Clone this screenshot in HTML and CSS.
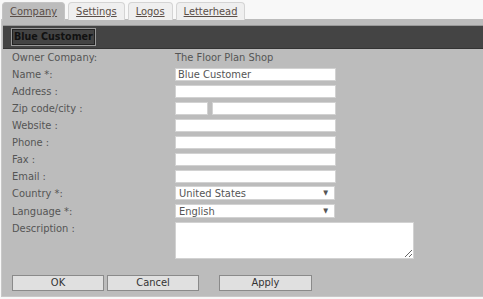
FILE: index.html
```html
<!DOCTYPE html>
<html>
<head>
<meta charset="utf-8">
<link rel="stylesheet" href="styles.css">
</head>
<body>
<div class="tabs">
  <a class="tab active">Company</a>
  <a class="tab">Settings</a>
  <a class="tab">Logos</a>
  <a class="tab">Letterhead</a>
</div>
<div class="panel">
  <div class="titlebar"><span class="title">Blue Customer</span></div>
  <div class="form">
    <div class="row owner"><span class="label">Owner Company:</span><span class="value">The Floor Plan Shop</span></div>
    <div class="row"><span class="label">Name *:</span><input class="inp" value="Blue Customer"></div>
    <div class="row"><span class="label">Address :</span><input class="inp"></div>
    <div class="row"><span class="label">Zip code/city :</span><input class="inp zip"><input class="inp city"></div>
    <div class="row"><span class="label">Website :</span><input class="inp"></div>
    <div class="row"><span class="label">Phone :</span><input class="inp"></div>
    <div class="row"><span class="label">Fax :</span><input class="inp"></div>
    <div class="row last-inp"><span class="label">Email :</span><input class="inp"></div>
    <div class="row sel-row"><span class="label">Country *:</span><div class="sel"><span>United States</span><span class="arrow">▼</span></div></div>
    <div class="row sel-row"><span class="label">Language *:</span><div class="sel"><span>English</span><span class="arrow">▼</span></div></div>
    <div class="row desc-row"><span class="label">Description :</span><textarea class="ta"></textarea></div>
  </div>
  <div class="buttons">
    <button class="btn">OK</button>
    <button class="btn">Cancel</button>
    <button class="btn apply">Apply</button>
  </div>
</div>
</body>
</html>
```

FILE: styles.css
```css
html, body {
  margin: 0;
  padding: 0;
  background: #f8f8f8;
  font-family: "DejaVu Sans Condensed", "DejaVu Sans", sans-serif;
  font-size: 11px;
  color: #555;
}
.tabs {
  display: flex;
  gap: 3px;
  padding: 2px 0 0 2px;
  height: 17px;
}
.tab {
  display: block;
  height: 17px;
  line-height: 17px;
  padding: 0 7px;
  border: 1px solid #d4d4d4;
  border-bottom: none;
  border-radius: 4px 4px 0 0;
  background: #efefef;
  color: #5a4e48;
  text-decoration: underline;
  font-size: 11px;
}
.tab.active {
  padding: 0 7px;
  background: #bcbcbc;
  border-color: #c4c4c4;
  height: 18px;
}
.panel {
  margin-left: 1px;
  background: #bcbcbc;
  border-left: 1px solid #c8c8c8;
  height: 278px;
  padding: 6px 0 0 1px;
  box-sizing: border-box;
  border-bottom: 1px solid #c8c8c8;
}
.titlebar {
  background: #444;
  border-top: 1px solid #999;
  border-bottom: 1px solid #333;
  height: 22px;
  display: flex;
  align-items: center;
  padding-left: 8px;
}
.title {
  font-weight: bold;
  color: #111;
  font-size: 10.6px;
  border: 1px solid #9a9a9a;
  padding: 1px 2px 2px 2px;
  line-height: 13px;
  background: #444;
  box-shadow: inset 0 0 0 1px #222;
}
.form {
  padding: 2px 0 0 9px;
}
.row {
  display: flex;
  align-items: center;
  height: 13px;
  margin-bottom: 4px;
}
.row.last-inp { margin-bottom: 3px; }
.label {
  width: 163px;
  flex: none;
}
.value {
  color: #555;
}
.inp {
  box-sizing: border-box;
  width: 161px;
  height: 13px;
  border: 1px solid #d2d2d2;
  background: #fff;
  padding: 0 2px;
  margin: 0;
  font-family: inherit;
  font-size: 11px;
  color: #555;
  outline: none;
}
.inp.zip { width: 33px; margin-right: 4px; }
.inp.city { width: 124px; }
.sel-row { height: 14px; }
.sel {
  box-sizing: border-box;
  width: 160px;
  height: 14px;
  border: 1px solid #d2d2d2;
  background: #fff;
  display: flex;
  justify-content: space-between;
  align-items: center;
  padding: 0 6px 0 3px;
  color: #555;
}
.arrow {
  font-size: 7px;
  color: #555;
}
.desc-row {
  height: 37px;
  align-items: flex-start;
}
.ta {
  box-sizing: border-box;
  width: 239px;
  height: 37px;
  border: 1px solid #d2d2d2;
  background: #fff;
  margin: 0;
  padding: 0;
  resize: both;
}
.buttons {
  display: flex;
  gap: 3px;
  padding: 12px 0 0 9px;
}
.btn {
  box-sizing: border-box;
  width: 92px;
  height: 16px;
  background: #e0e0e0;
  border: 1px solid #8a8a8a;
  padding: 0;
  font-family: inherit;
  font-size: 11px;
  color: #333;
  line-height: 14px;
}
.btn.apply { margin-left: 17px; width: 93px; }
```
